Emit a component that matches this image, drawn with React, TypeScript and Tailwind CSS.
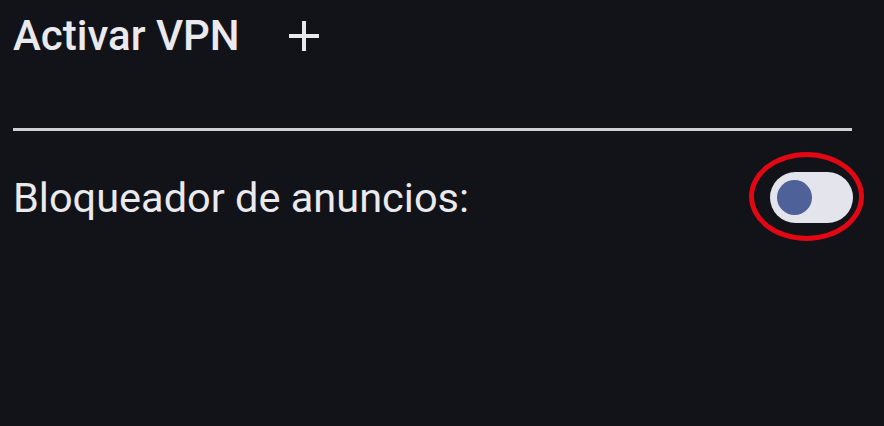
import React, { useState } from 'react';

function App() {
  const [adBlock, setAdBlock] = useState(false);

  return (
    <div className="w-[884px] h-[426px] bg-[#121318] text-[#e9e9ee] overflow-hidden" style={{ fontFamily: 'Roboto, "Liberation Sans", sans-serif' }}>
      <div className="pl-[13px] pr-[32px] pt-[15px]">
        {/* header */}
        <div className="flex items-center">
          <span className="text-[42px] leading-none font-medium">Activar VPN</span>
          <button className="ml-[48px] w-[32px] h-[32px] flex items-center justify-center">
            <svg viewBox="0 0 32 32" className="w-[32px] h-[32px]" stroke="#e9e9ee" strokeWidth="4" strokeLinecap="butt">
              <path d="M16 1v30M1 16h30" />
            </svg>
          </button>
        </div>

        <div className="mt-[71px] h-[3px] bg-[#cfcfd4]" />

        {/* ad blocker row */}
        <div className="flex items-center justify-between mt-[41px]">
          <span className="text-[41.5px] leading-none">Bloqueador de anuncios:</span>
          <div className="relative mr-[-1px]">
            <button
              onClick={() => setAdBlock((v) => !v)}
              className="w-[83px] h-[51px] rounded-full bg-[#e4e4ec] flex items-center px-[7px]"
            >
              <span className={`w-[35px] h-[35px] rounded-full bg-[#4e6198] ${adBlock ? 'ml-auto' : ''}`} />
            </button>
            {/* annotation circle */}
            <div className="absolute left-[-21px] top-[-20px] w-[115px] h-[89px] rounded-[50%] border-[5px] border-[#e30613] pointer-events-none" />
          </div>
        </div>
      </div>
    </div>
  );
}

export default App;
